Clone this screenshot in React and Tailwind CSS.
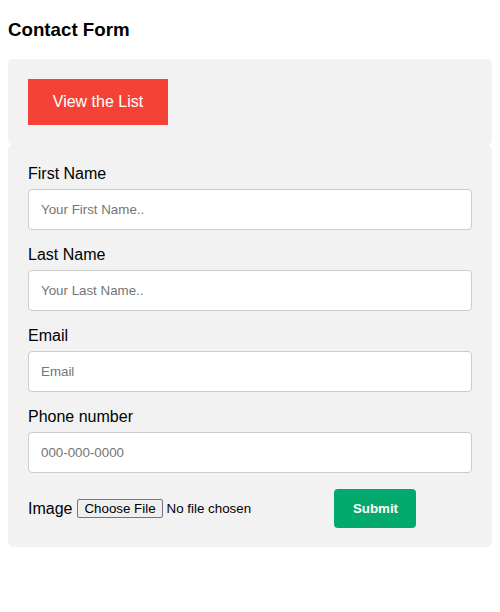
import React from "react";

const fields = [
  { label: "First Name", ph: "Your First Name.." },
  { label: "Last Name", ph: "Your Last Name.." },
  { label: "Email", ph: "Email" },
  { label: "Phone number", ph: "000-000-0000" },
];

export default function App() {
  return (
    <div className="px-2 bg-white min-h-[612px] text-black" style={{ fontFamily: '"Liberation Sans", Arial, sans-serif' }}>
      <h3 className="text-[18.72px] font-bold leading-[21.5px] pt-[18.72px] pb-[18.72px]">Contact Form</h3>
      <div className="bg-[#f2f2f2] rounded-[5px] p-5">
        <button className="bg-[#f44336] text-white text-[16px] leading-[18px] whitespace-nowrap flex items-center justify-center w-[140px] h-[46px]">
          View the List
        </button>
      </div>
      <div className="bg-[#f2f2f2] rounded-[5px] px-5 pt-5 pb-[19px]">
        {fields.map((f) => (
          <div key={f.label}>
            <label className="block text-[16px] leading-[18px]">{f.label}</label>
            <input
              type="text"
              placeholder={f.ph}
              className="block w-full h-[41px] mt-[6px] mb-[16px] px-3 bg-white border border-[#ccc] rounded-[4px] text-[13.33px] placeholder:text-[#757575] outline-none"
            />
          </div>
        ))}
        <div className="flex items-center h-[39px]">
          <span className="text-[16px] leading-[19px]">Image</span>
          <input
            type="file"
            className="ml-[5px] w-[253px] text-[13.33px] leading-[15px] file:border file:border-solid file:border-[#767676] file:rounded-[2px] file:bg-[#efefef] file:px-[6px] file:py-[1px] file:mr-[4px] file:text-[13.33px] file:text-black"
            style={{ fontFamily: '"Liberation Sans", Arial, sans-serif' }}
          />
          <button className="ml-[4px] bg-[#04aa6d] text-white font-bold text-[13.33px] leading-[15px] rounded-[4px] w-[82px] h-[39px] flex items-center justify-center">
            Submit
          </button>
        </div>
      </div>
    </div>
  );
}
